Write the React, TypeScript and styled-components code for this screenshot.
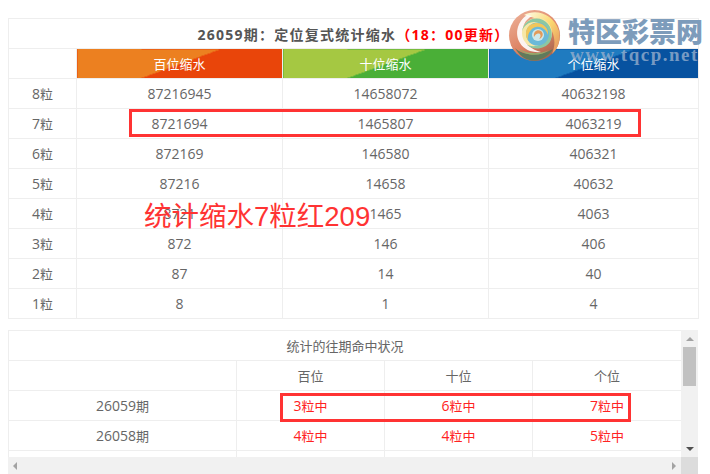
import React from 'react';
import styled, { createGlobalStyle } from 'styled-components';

const GlobalStyle = createGlobalStyle`
  html, body {
    margin: 0;
    background: #fff;
    overflow: hidden;
  }
`;

const Page = styled.div`
  position: relative;
  width: 710px;
  height: 474px;
  overflow: hidden;
  box-sizing: border-box;
  padding: 18px 12px 0 8px;
  display: flex;
  flex-direction: column;
  gap: 11px;
  color: #666;
  font-family: "Open Sans", "Noto Sans CJK SC", sans-serif;
  font-size: 14px;
`;

const Table = styled.table`
  width: 100%;
  border-collapse: collapse;
  table-layout: fixed;
  background: #fff;
  td, th {
    border: 1px solid #eee;
    height: 29px;
    padding: 0;
    text-align: center;
    font-weight: normal;
  }
`;

const TitleCell = styled.th`
  font-size: 14px;
  letter-spacing: 1.25px;
  color: #555;
  && { font-weight: bold; }
`;

const RedText = styled.span`
  color: #f00;
`;

const Cjk = styled.span`
  font-size: 13px;
`;

const BannerCell = styled.th<{ $from: string; $to: string }>`
  color: #fff;
  font-size: 13px;
  background: linear-gradient(160deg, ${p => p.$from} 50%, ${p => p.$to} 50%);
`;

const HitCell = styled.td`
  color: #f22;
`;

const ScrollPanel = styled.div`
  display: grid;
  grid-template-columns: 673px 17px;
  grid-template-rows: 127px 17px;
  width: 690px;
`;

const ScrollBody = styled.div`
  overflow: hidden;
`;

const VBar = styled.div`
  background: #f1f1f1;
  display: flex;
  flex-direction: column;
  align-items: center;
  justify-content: space-between;
  padding: 7px 0 6px;
  box-sizing: border-box;
  position: relative;
`;

const VThumb = styled.div`
  position: absolute;
  top: 17px;
  left: 2px;
  width: 13px;
  height: 39px;
  background: #c1c1c1;
`;

const HBar = styled.div`
  background: #f1f1f1;
  display: flex;
  align-items: center;
  justify-content: space-between;
  padding: 0 5px;
`;

const Corner = styled.div`
  background: #dcdcdc;
`;

const Arrow = styled.span<{ $dir: 'up' | 'down' | 'left' | 'right'; $color: string }>`
  width: 0;
  height: 0;
  border: 4px solid transparent;
  ${p => p.$dir === 'up' && `border-bottom-color: ${p.$color}; border-top-width: 0;`}
  ${p => p.$dir === 'down' && `border-top-color: ${p.$color}; border-bottom-width: 0;`}
  ${p => p.$dir === 'left' && `border-right-color: ${p.$color}; border-left-width: 0;`}
  ${p => p.$dir === 'right' && `border-left-color: ${p.$color}; border-right-width: 0;`}
`;

const RedBox = styled.div<{ $x: number; $y: number; $w: number; $h: number }>`
  position: absolute;
  left: ${p => p.$x}px;
  top: ${p => p.$y}px;
  width: ${p => p.$w}px;
  height: ${p => p.$h}px;
  box-sizing: border-box;
  border: 3px solid #f33;
`;

const Stamp = styled.div`
  position: absolute;
  left: 144px;
  top: 198px;
  color: #f33;
  font-family: "Liberation Sans", "Noto Sans CJK SC", sans-serif;
  font-size: 27.5px;
  line-height: 38px;
  white-space: nowrap;
`;

const LogoMark = styled.svg`
  position: absolute;
  left: 508px;
  top: 9px;
  width: 53px;
  height: 53px;
`;

const LogoTitle = styled.div`
  position: absolute;
  left: 568px;
  top: 12px;
  font-family: "Noto Sans CJK SC", sans-serif;
  font-weight: 900;
  font-size: 27px;
  line-height: 38px;
  color: #7d9cbb;
  white-space: nowrap;
`;

const LogoUrl = styled.div`
  position: absolute;
  left: 570px;
  top: 44px;
  font-family: "Liberation Serif", serif;
  font-weight: bold;
  font-size: 19px;
  line-height: 22px;
  letter-spacing: 1.5px;
  color: rgba(150, 175, 205, 0.8);
  white-space: nowrap;
`;

const rows: [string, string, string, string][] = [
  ['8', '87216945', '14658072', '40632198'],
  ['7', '8721694', '1465807', '4063219'],
  ['6', '872169', '146580', '406321'],
  ['5', '87216', '14658', '40632'],
  ['4', '8721', '1465', '4063'],
  ['3', '872', '146', '406'],
  ['2', '87', '14', '40'],
  ['1', '8', '1', '4'],
];

const history: [string, string, string, string][] = [
  ['26059', '3', '6', '7'],
  ['26058', '4', '4', '5'],
];

const Logo = () => (
  <LogoMark viewBox="0 0 53 53">
    <defs>
      <linearGradient id="rim" x1="0" y1="0" x2="0.6" y2="1">
        <stop offset="0" stopColor="#eeb49c" />
        <stop offset="0.65" stopColor="#dd8364" />
        <stop offset="1" stopColor="#a8674f" />
      </linearGradient>
      <linearGradient id="sun" x1="0.2" y1="0" x2="1" y2="0.7">
        <stop offset="0" stopColor="#fdf6d2" />
        <stop offset="0.55" stopColor="#fbd76f" />
        <stop offset="1" stopColor="#e9a163" />
      </linearGradient>
    </defs>
    <circle cx="26.5" cy="26.5" r="25.5" fill="url(#rim)" />
    {/* bright outer band running over the top */}
    <path d="M16 6 C28 -1 46 5 51 22 C53 31 50 40 44 45 C49 33 46 20 37 14 C30 9 22 8 16 6 Z" fill="url(#sun)" />
    {/* dark lower crescent */}
    <path d="M7 39 C14 46 30 49 45 40 C40 49 30 52 24 51.5 C17 51 11 46 7 39 Z" fill="#5f7a5c" />
    <path d="M11 40 C19 45 31 46 41 41 C34 47 19 48 11 40 Z" fill="#8fb06e" />
    {/* white streak swirling out of the centre */}
    <path d="M19 6 C10 12 6 24 12 34 C16 41 25 44 33 43 C24 41 16 35 15 25 C14 17 17 11 24 7 Z" fill="#fff" opacity="0.9" />
    {/* inner swirl */}
    <g transform="translate(0 -2)">
      <circle cx="29" cy="26" r="15" fill="#f7e7a6" />
      <path d="M14 24 C16 14 26 9 35 13 C43 17 46 27 42 35 C37 42 26 44 19 38 C27 41 36 38 38 30 C40 22 34 15 26 15 C20 15 16 19 14 24 Z" fill="#8cc8a2" />
      <circle cx="29.5" cy="27" r="11.5" fill="#6bb9d8" />
      <path d="M20 33 C15 25 20 16 29 16 C36 16 41 22 40 28 C38 22 33 19 28 20 C23 21 19 27 20 33 Z" fill="#f1c65a" />
      <circle cx="30" cy="28" r="6" fill="#cfe8ea" />
      <path d="M26 30 C25 25 29 22 33 24 C36 26 35 31 31 32 C33 30 33 27 31 26.5 C29 26 27 28 26 30 Z" fill="#e39a5a" />
    </g>
  </LogoMark>
);

export default function App() {
  return (
    <Page>
      <GlobalStyle />
      <Table>
        <colgroup>
          <col style={{ width: 68 }} />
          <col style={{ width: 206 }} />
          <col style={{ width: 206 }} />
          <col style={{ width: 210 }} />
        </colgroup>
        <thead>
          <tr>
            <TitleCell colSpan={4}>
              26059期：定位复式统计缩水<RedText>（18：00更新）</RedText>
            </TitleCell>
          </tr>
          <tr>
            <th />
            <BannerCell $from="#ec8020" $to="#e9450a">百位缩水</BannerCell>
            <BannerCell $from="#a5c842" $to="#4aaf37">十位缩水</BannerCell>
            <BannerCell $from="#1f7bc0" $to="#0752a0">个位缩水</BannerCell>
          </tr>
        </thead>
        <tbody>
          {rows.map(r => (
            <tr key={r[0]}>
              <td>{r[0]}<Cjk>粒</Cjk></td>
              <td>{r[1]}</td>
              <td>{r[2]}</td>
              <td>{r[3]}</td>
            </tr>
          ))}
        </tbody>
      </Table>

      <ScrollPanel>
        <ScrollBody>
          <Table>
            <colgroup>
              <col style={{ width: 228 }} />
              <col style={{ width: 148 }} />
              <col style={{ width: 148 }} />
              <col style={{ width: 149 }} />
            </colgroup>
            <thead>
              <tr>
                <th colSpan={4}><Cjk>统计的往期命中状况</Cjk></th>
              </tr>
              <tr>
                <th />
                <th><Cjk>百位</Cjk></th>
                <th><Cjk>十位</Cjk></th>
                <th><Cjk>个位</Cjk></th>
              </tr>
            </thead>
            <tbody>
              {history.map(r => (
                <tr key={r[0]}>
                  <td>{r[0]}<Cjk>期</Cjk></td>
                  <HitCell>{r[1]}<Cjk>粒中</Cjk></HitCell>
                  <HitCell>{r[2]}<Cjk>粒中</Cjk></HitCell>
                  <HitCell>{r[3]}<Cjk>粒中</Cjk></HitCell>
                </tr>
              ))}
              <tr>
                <td />
                <td />
                <td />
                <td />
              </tr>
            </tbody>
          </Table>
        </ScrollBody>
        <VBar>
          <Arrow $dir="up" $color="#a3a3a3" />
          <VThumb />
          <Arrow $dir="down" $color="#505050" />
        </VBar>
        <HBar>
          <Arrow $dir="left" $color="#a3a3a3" />
          <Arrow $dir="right" $color="#a3a3a3" />
        </HBar>
        <Corner />
      </ScrollPanel>

      <RedBox $x={129} $y={109} $w={512} $h={28} />
      <RedBox $x={280} $y={393} $w={351} $h={29} />
      <Stamp>统计缩水7粒红209</Stamp>
      <Logo />
      <LogoTitle>特区彩票网</LogoTitle>
      <LogoUrl>www.tqcp.net</LogoUrl>
    </Page>
  );
}
